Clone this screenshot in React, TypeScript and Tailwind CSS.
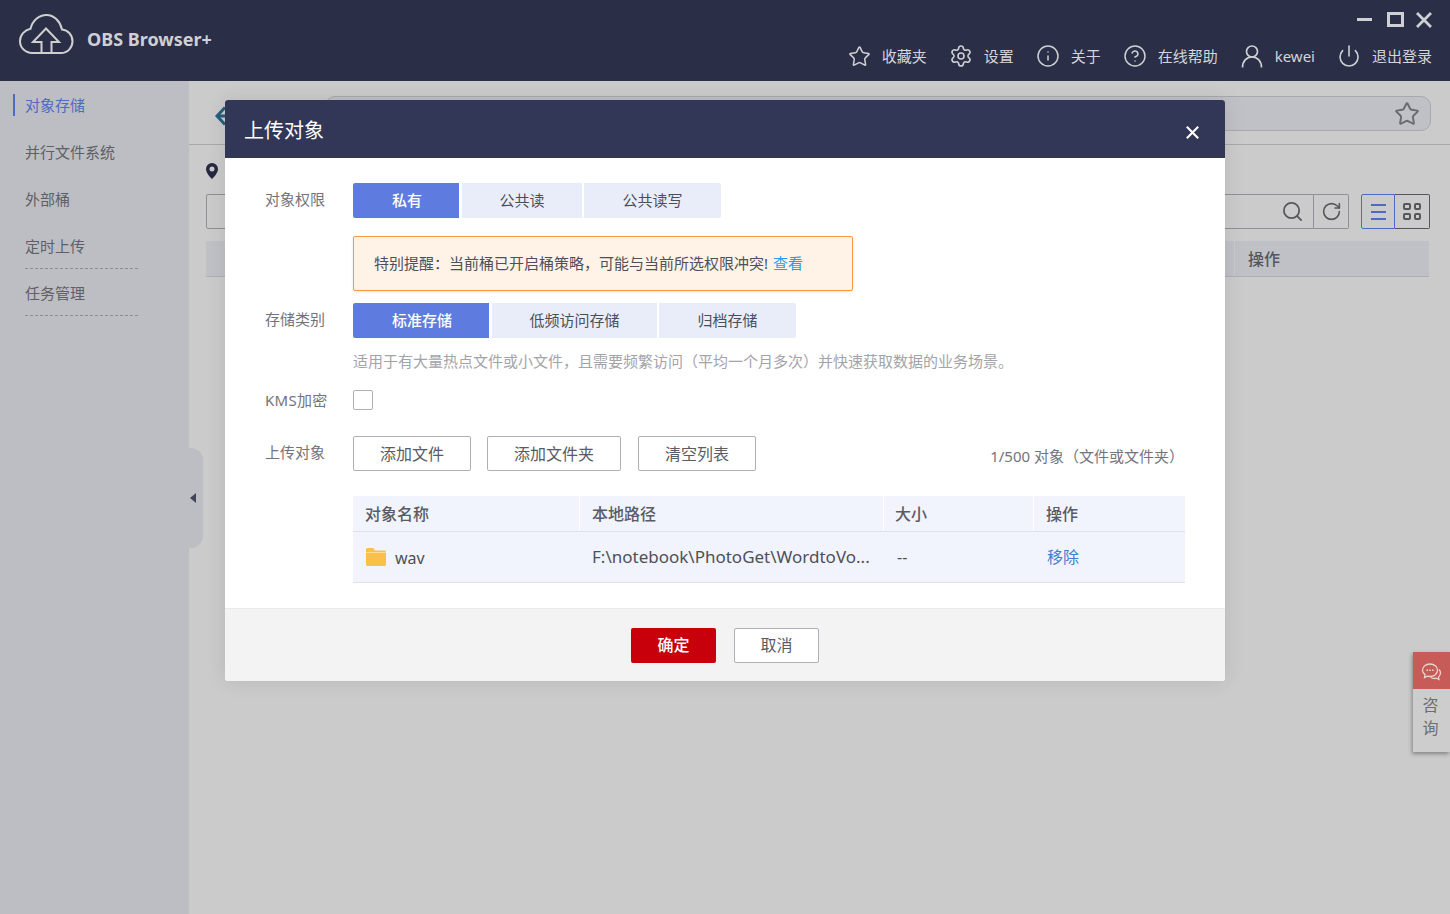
import React from "react";
import { Star, Settings, Info, CircleHelp, Power, Search, RotateCw } from "lucide-react";

const font = "font-['Noto_Sans','Noto_Sans_CJK_SC',sans-serif]";

const CloudLogo = () => (
  <svg width="56" height="42" viewBox="0 0 56 42" fill="none" stroke="#cfcfcf" strokeWidth="2" className="mt-[-9px]">
    <path d="M13 39h29c6.500 0 11.500-5.200 11.500-11.800 0-6.200-4.500-11-10.500-11.700C41 7 35 1 27.500 1 20 1 13.500 6.500 11.500 14.800 5.500 16 1 21 1 27.200 1 33.800 6.500 39 13 39z" />
    <path d="M22.500 39V28H14L27 14.500 40 28H32.500V39" />
  </svg>
);

const CrossIcon = ({ size, width }: { size: number; width: number }) => (
  <svg width={size} height={size} viewBox="0 0 16 16" fill="none" stroke="currentColor" strokeWidth={width}>
    <path d="M1 1l14 14M15 1 1 15" />
  </svg>
);

const UserIcon = () => (
  <svg width="24" height="24" viewBox="0 0 24 24" fill="none" stroke="currentColor" strokeWidth="1.700">
    <circle cx="12" cy="7.500" r="5.500" />
    <path d="M2.500 23.500c0-6.500 4-10.500 9.500-10.500s9.500 4 9.500 10.500" />
  </svg>
);

const TopAction = ({ icon, label, gap = "gap-[11px]" }: { icon: React.ReactNode; label: string; gap?: string }) => (
  <div className={`flex items-center ${gap}`}>
    {icon}
    <span className="text-[15px] leading-[22px] text-[#d4d5da]">{label}</span>
  </div>
);

const SideItem = ({ label, active, dashed }: { label: string; active?: boolean; dashed?: boolean }) => (
  <div className="relative h-[47px] pl-[25px]">
    {active && <div className="absolute left-[13px] top-[13px] h-[22px] w-[2px] bg-[#4f69c4]" />}
    <div className={`w-[113px] h-[47px] flex items-center text-[15px] ${active ? "text-[#4f69c4]" : "text-[#5f6066]"} ${dashed ? "border-b border-dashed border-[#8c8d92]" : ""}`}>
      <span className="relative top-[1px]">{label}</span>
    </div>
  </div>
);

const Segment = ({ label, on, w, first, last }: { label: string; on?: boolean; w: string; first?: boolean; last?: boolean }) => (
  <div className={`${w} h-[35px] flex items-center justify-center text-[15px] ${on ? "bg-[#5e7ce0] text-white font-medium pl-[2px]" : "bg-[#e9edfa] text-[#4c4d58]"} ${first ? "rounded-l-[2px]" : ""} ${last ? "rounded-r-[2px]" : ""}`}>
    {label}
  </div>
);

const FormLabel = ({ children }: { children: React.ReactNode }) => (
  <div className="w-[128px] shrink-0 pl-[40px] text-[15px] text-[#72737c]">{children}</div>
);

const OutlineBtn = ({ label, w }: { label: string; w: string }) => (
  <div className={`${w} h-[35px] flex items-center justify-center rounded-[2px] border border-[#adb0b8] text-[16px] text-[#5a5b64]`}>
    {label}
  </div>
);

const UploadModal = () => (
  <div className="absolute left-[225px] top-[100px] w-[1000px] h-[581px] rounded-[3px] overflow-hidden bg-white flex flex-col shadow-[0_0_20px_rgba(0,0,0,0.1)]">
    <div className="h-[58px] shrink-0 bg-[#333757] flex items-center justify-between pl-[19px] pr-[26px]">
      <span className="text-[20px] text-white relative top-[2px]">上传对象</span>
      <span className="text-white mt-[6px]"><CrossIcon size={13} width={2.600} /></span>
    </div>

    <div className="flex-1 pt-[25px]">
      <div className="flex items-center h-[35px]">
        <FormLabel><span className="relative top-[-1px]">对象权限</span></FormLabel>
        <div className="flex">
          <Segment label="私有" on w="w-[106px]" first />
          <div className="w-[3px]" />
          <Segment label="公共读" w="w-[120px]" />
          <div className="w-[2px]" />
          <Segment label="公共读写" w="w-[137px]" last />
        </div>
      </div>

      <div className="ml-[128px] mt-[18px] w-[500px] h-[55px] flex items-center pl-[20px] rounded-[2px] border border-[#fa9841] bg-[#fff3e8] text-[15px] text-[#4e4f58] shadow-[0_1px_3px_rgba(0,0,0,0.1)]">
        {"特别提醒\uFF1A当前桶已开启桶策略\uFF0C可能与当前所选权限冲突!"}<span className="ml-[5px] text-[#2a9bf0]">查看</span>
      </div>

      <div className="flex items-center h-[35px] mt-[12px]">
        <FormLabel><span className="relative top-[-1px]">存储类别</span></FormLabel>
        <div className="flex">
          <Segment label="标准存储" on w="w-[136px]" first />
          <div className="w-[3px]" />
          <Segment label="低频访问存储" w="w-[165px]" />
          <div className="w-[2px]" />
          <Segment label="归档存储" w="w-[137px]" last />
        </div>
      </div>

      <div className="ml-[128px] mt-[11px] text-[15px] leading-[24px] text-[#a3a4aa]">
        {"适用于有大量热点文件或小文件\uFF0C且需要频繁访问\uFF08平均一个月多次\uFF09并快速获取数据的业务场景。"}
      </div>

      <div className="flex items-center h-[20px] mt-[17px]">
        <FormLabel><span className="tracking-[0.3px]">KMS加密</span></FormLabel>
        <div className="w-[20px] h-[20px] rounded-[2px] border border-[#adb0b8] bg-white" />
      </div>

      <div className="flex items-center h-[35px] mt-[26px] pr-[41px]">
        <FormLabel><span className="relative top-[-1px]">上传对象</span></FormLabel>
        <div className="flex gap-[16px]">
          <OutlineBtn label="添加文件" w="w-[118px]" />
          <OutlineBtn label="添加文件夹" w="w-[134px]" />
          <div className="ml-[1px]"><OutlineBtn label="清空列表" w="w-[118px]" /></div>
        </div>
        <div className="ml-auto relative top-[3px] text-[15px] text-[#72737c]">{"1/500 对象\uFF08文件或文件夹\uFF09"}</div>
      </div>

      <div className="ml-[128px] mt-[25px] w-[832px] text-[#4e4f58]">
        <div className="flex h-[36px] bg-[#f1f4fc] border-b border-[#dfe1e8] text-[16px] font-medium text-[#5a5b64]">
          <div className="w-[227px] pl-[12px] flex items-center border-r border-white">对象名称</div>
          <div className="w-[304px] pl-[12px] flex items-center border-r border-white">本地路径</div>
          <div className="w-[150px] pl-[11px] flex items-center border-r border-white">大小</div>
          <div className="flex-1 pl-[12px] flex items-center">操作</div>
        </div>
        <div className="flex h-[51px] bg-[#f1f4fc] border-b border-[#dfe1e8] text-[16px]">
          <div className="w-[227px] pl-[13px] flex items-center gap-[9px]">
            <svg width="20" height="18" viewBox="0 0 20 18">
              <path d="M1.500 0h5.500l2 2.500h9.500a1.500 1.500 0 0 1 1.500 1.500v12.500a1.500 1.500 0 0 1-1.500 1.500h-17A1.500 1.500 0 0 1 0 16.500v-15A1.500 1.500 0 0 1 1.500 0z" fill="#fac04a" />
              <path d="M0 4.500h20" stroke="#fde4a8" strokeWidth="0.800" />
            </svg>
            <span className="relative top-[1px]">wav</span>
          </div>
          <div className="w-[304px] pl-[12px] flex items-center text-[17px]">
            <span className="whitespace-nowrap">F:\notebook\PhotoGet\WordtoVo...</span>
          </div>
          <div className="w-[150px] pl-[13px] flex items-center text-[16px]">--</div>
          <div className="flex-1 pl-[13px] flex items-center text-[#3f7fd0]">移除</div>
        </div>
      </div>
    </div>

    <div className="h-[73px] shrink-0 bg-[#f3f3f3] border-t border-[#eaeaea] flex items-center justify-center gap-[18px]">
      <div className="w-[85px] h-[35px] flex items-center justify-center rounded-[2px] bg-[#c7000b] text-[16px] font-medium text-white">确定</div>
      <div className="w-[85px] h-[35px] flex items-center justify-center rounded-[2px] border border-[#adb0b8] bg-white text-[16px] text-[#5a5b64]">取消</div>
    </div>
  </div>
);

export default function App() {
  return (
    <div className={`relative h-[914px] w-[1450px] overflow-hidden bg-[#cbcbcb] ${font}`}>
      {/* Title bar */}
      <header className="h-[81px] bg-[#2a2e47] flex justify-between">
        <div className="flex items-center pl-[19px] gap-[12px] pb-[2px]">
          <CloudLogo />
          <span className="text-[18px] font-bold text-[#cfd0d4]">OBS Browser+</span>
        </div>
        <div className="flex flex-col items-end pr-[18px]">
          <div className="flex items-center h-[39px] text-[#cfd0d4]">
            <div className="w-[15px] h-[3px] bg-[#cfd0d4]" />
            <div className="ml-[15px] w-[17px] h-[15px] border-[3px] border-[#cfd0d4]" />
            <span className="ml-[12px]"><CrossIcon size={16} width={2.800} /></span>
          </div>
          <div className="flex items-center gap-[22px] h-[34px] text-[#cfd0d4]">
            <TopAction icon={<Star size={23} strokeWidth={1.600} />} label="收藏夹" />
            <TopAction icon={<Settings size={24} strokeWidth={1.600} />} label="设置" />
            <TopAction icon={<Info size={24} strokeWidth={1.500} />} label="关于" />
            <TopAction icon={<CircleHelp size={24} strokeWidth={1.500} />} label="在线帮助" />
            <TopAction icon={<UserIcon />} label="kewei" />
            <TopAction icon={<Power size={24} strokeWidth={1.600} />} label="退出登录" />
          </div>
        </div>
      </header>

      <div className="flex h-[833px]">
        {/* Sidebar */}
        <aside className="w-[189px] shrink-0 bg-[#bdbec3]">
          <SideItem label="对象存储" active />
          <SideItem label="并行文件系统" />
          <SideItem label="外部桶" />
          <SideItem label="定时上传" dashed />
          <SideItem label="任务管理" dashed />
        </aside>

        {/* Main area, mostly hidden behind the dialog */}
        <main className="flex-1 min-w-0">
          <div className="h-[64px] border-b border-[#a9a9ab] flex items-center pl-[26px] pr-[19px]">
            <svg width="12" height="20" viewBox="0 0 12 20" className="shrink-0 mt-[7px]">
              <path d="M10 1.500 2 10l8 8.500M2 10h10" fill="none" stroke="#275e7a" strokeWidth="3" />
            </svg>
            <div className="ml-auto w-[1106px] h-[35px] rounded-[10px] border border-[#a9a9ad] bg-[#c0c1c6] flex items-center justify-end pr-[10px] mt-[1px]">
              <Star size={26} strokeWidth={1.800} className="text-[#6a6b70] relative top-[1px]" />
            </div>
          </div>
          <div className="pl-[17px] pr-[20px] pt-[18px]">
            <svg width="12" height="16" viewBox="0 0 12 16" className="block">
              <path fillRule="evenodd" d="M6 0a6 6 0 0 1 6 6c0 3.500-3.500 7.500-6 10C3.500 13.500 0 9.500 0 6a6 6 0 0 1 6-6zm0 3.500a2.500 2.500 0 1 0 0 5 2.500 2.500 0 0 0 0-5z" fill="#26293f" />
            </svg>
            <div className="mt-[15px] flex items-center">
              <div className="flex-1 h-[35px] rounded-l-[2px] border border-[#8f9095] flex items-center justify-end pr-[9px]">
                <Search size={23} strokeWidth={1.800} className="text-[#55565c]" />
              </div>
              <div className="w-[35px] h-[35px] rounded-r-[2px] border border-l-0 border-[#8f9095] flex items-center justify-center">
                <RotateCw size={21} strokeWidth={1.800} className="text-[#55565c]" />
              </div>
              <div className="ml-[12px] w-[34px] h-[35px] rounded-l-[2px] border border-[#4f69c4] flex flex-col items-center justify-center gap-[5px]">
                <div className="w-[15px] h-[2px] bg-[#4f69c4]" />
                <div className="w-[15px] h-[2px] bg-[#4f69c4]" />
                <div className="w-[15px] h-[2px] bg-[#4f69c4]" />
              </div>
              <div className="w-[35px] h-[35px] rounded-r-[2px] border border-l-0 border-[#55565c] grid grid-cols-2 place-content-center justify-center gap-[3px] px-[8px]">
                <div className="h-[7px] rounded-[2px] border-2 border-[#55565c]" />
                <div className="h-[7px] rounded-[2px] border-2 border-[#55565c]" />
                <div className="h-[7px] rounded-[2px] border-2 border-[#55565c]" />
                <div className="h-[7px] rounded-[2px] border-2 border-[#55565c]" />
              </div>
            </div>
            <div className="mt-[12px] mr-[1px] h-[36px] bg-[#c0c1c6] border-b border-[#afb0b4] flex justify-end">
              <div className="w-[195px] border-l border-[#cbcbcb] pl-[13px] flex items-center text-[16px] font-medium text-[#55565c]">操作</div>
            </div>
          </div>
        </main>
      </div>

      {/* Sidebar collapse handle */}
      <div className="absolute left-[189px] top-[448px] w-[14px] h-[100px] rounded-r-[12px] bg-[#bdbec3] flex items-center justify-center">
        <div className="ml-[-6px] w-0 h-0 border-y-[5px] border-y-transparent border-r-[6px] border-r-[#43465a]" />
      </div>

      <UploadModal />

      {/* Floating consult tab */}
      <div className="absolute right-0 top-[652px] w-[37px] h-[100px] bg-[#cdcdcd] shadow-[-1px_2px_4px_rgba(0,0,0,0.35)]">
        <div className="h-[37px] bg-[#c75b57] flex items-center justify-center pr-[1px] pt-[3px]">
          <svg width="21" height="20" viewBox="0 0 21 20" fill="none" stroke="#e9d4d2" strokeWidth="1.300">
            <path d="M9 2c4.200 0 7.500 2.700 7.500 6.200s-3.300 6.300-7.500 6.300c-.9 0-1.800-.1-2.600-.4L3.500 15.500l.5-3C2.500 11.400 1.500 9.900 1.500 8.200 1.500 4.700 4.800 2 9 2z" />
            <path d="M18 7.500c1 1 1.500 2.200 1.500 3.500 0 1.600-.8 3-2 3.900l.4 2.600-2.700-1.300c-.6.200-1.300.3-2 .3-1.300 0-2.500-.4-3.400-1" />
            <path d="M5.500 8.200h1.500M8.300 8.200h1.500M11.100 8.200h1.500" strokeWidth="1.500" />
          </svg>
        </div>
        <div className="pt-[5px] pr-[2px] flex flex-col items-center text-[16px] leading-[23px] text-[#6e6e70]">
          <span>咨</span>
          <span>询</span>
        </div>
      </div>
    </div>
  );
}
